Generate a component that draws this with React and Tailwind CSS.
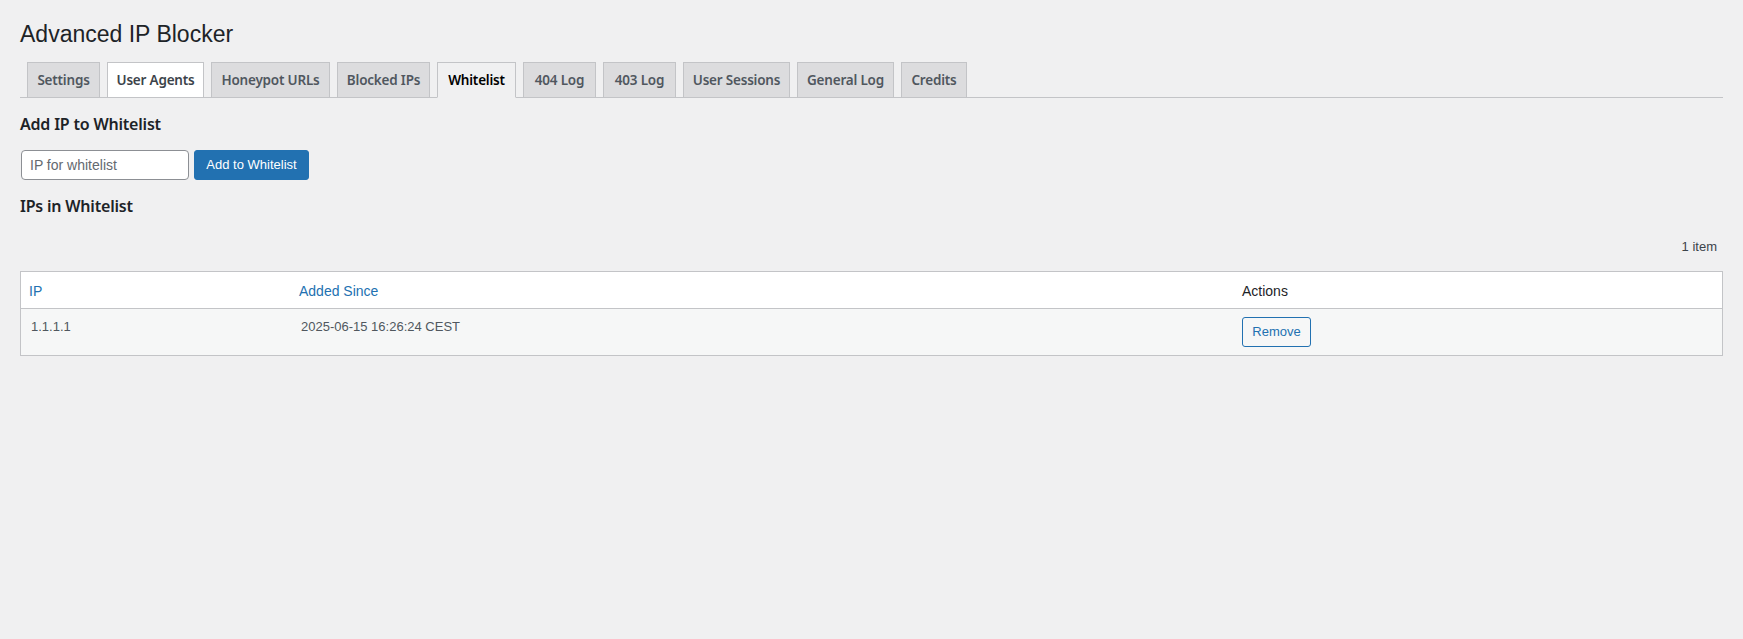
import React, { useState } from "react";

// tab widths measured from the admin screen, text is centred inside
const TABS = [
  { label: "Settings", w: "w-[73px]" },
  { label: "User Agents", w: "w-[97px]", hover: true },
  { label: "Honeypot URLs", w: "w-[119px]" },
  { label: "Blocked IPs", w: "w-[93px]" },
  { label: "Whitelist", w: "w-[79px]", active: true },
  { label: "404 Log", w: "w-[73px]" },
  { label: "403 Log", w: "w-[73px]" },
  { label: "User Sessions", w: "w-[107px]" },
  { label: "General Log", w: "w-[97px]" },
  { label: "Credits", w: "w-[66px]" },
];

const ROWS = [{ ip: "1.1.1.1", since: "2025-06-15 16:26:24 CEST" }];

const SEMI = { fontFamily: '"Noto Sans", "Liberation Sans", sans-serif' };

const Tab = ({ tab }) => {
  let look = "bg-[#dcdcde] text-[#50575e] border-[#c3c4c7]";
  if (tab.active) look = "bg-[#f0f0f1] text-black border-[#c3c4c7] border-b-[#f0f0f1]";
  else if (tab.hover) look = "bg-white text-[#3c434a] border-[#c3c4c7]";

  return (
    <a
      href="#"
      style={SEMI}
      className={`${tab.w} ${look} -mb-px block h-[36px] border py-[5px] text-center text-[13.5px] font-semibold leading-[24px] tracking-[-0.2px]`}
    >
      {tab.label}
    </a>
  );
};

export default function App() {
  const [ip, setIp] = useState("");
  const [rows, setRows] = useState(ROWS);

  return (
    <div
      className="min-h-screen bg-[#f0f0f1] px-[20px] pt-[10px] text-[13px] text-[#3c434a]"
      style={{ fontFamily: '"Liberation Sans", Arial, sans-serif' }}
    >
      {/* Titel */}
      <h1 className="pb-[4px] pt-[9px] text-[23px] font-normal leading-[30px] text-[#1d2327]">
        Advanced IP Blocker
      </h1>

      {/* Tabs */}
      <nav className="flex gap-[7px] border-b border-[#c3c4c7] pl-[7px] pt-[9px]">
        {TABS.map((t) => (
          <Tab key={t.label} tab={t} />
        ))}
      </nav>

      {/* Formular */}
      <h2
        style={SEMI}
        className="my-[17px] text-[16px] font-semibold leading-[18px] tracking-[-0.2px] text-[#1d2327]"
      >
        Add IP to Whitelist
      </h2>
      <form
        className="flex items-center"
        onSubmit={(e) => {
          e.preventDefault();
          if (!ip) return;
          setRows([...rows, { ip, since: "2025-06-15 16:26:24 CEST" }]);
          setIp("");
        }}
      >
        <input
          value={ip}
          onChange={(e) => setIp(e.target.value)}
          placeholder="IP for whitelist"
          className="ml-px h-[30px] w-[168px] rounded-[4px] border border-[#8c8f94] bg-white px-[8px] text-[14px] text-[#2c3338] placeholder:text-[#646970] focus:outline-none"
        />
        <button
          type="submit"
          className="ml-[5px] h-[30px] w-[115px] rounded-[3px] border border-[#2271b1] bg-[#2271b1] text-[13px] text-white"
        >
          Add to Whitelist
        </button>
      </form>

      <h2
        style={SEMI}
        className="mb-[17px] mt-[17px] text-[16px] font-semibold leading-[18px] tracking-[-0.2px] text-[#1d2327]"
      >
        IPs in Whitelist
      </h2>

      {/* Tabellen-Navigation */}
      <div className="flex h-[39px] justify-end pt-[1px]">
        <span className="mr-[6px] text-[13px] leading-[28px] text-[#3c434a]">
          {rows.length} {rows.length === 1 ? "item" : "items"}
        </span>
      </div>

      {/* Tabelle */}
      <div className="border border-[#c3c4c7] bg-white">
        <table className="w-full table-fixed border-collapse text-left">
          <thead>
            <tr className="border-b border-[#c3c4c7]">
              <th className="h-[36px] w-[270px] px-[8px] pb-0 pt-[3px] text-[14px] font-normal text-[#2271b1]">
                <a href="#">IP</a>
              </th>
              <th className="h-[36px] w-[941px] px-[8px] pb-0 pt-[3px] text-[14px] font-normal text-[#2271b1]">
                <a href="#">Added Since</a>
              </th>
              <th className="h-[36px] px-[10px] pb-0 pt-[3px] text-[14px] font-normal text-[#1d2327]">Actions</th>
            </tr>
          </thead>
          <tbody>
            {rows.map((r, i) => (
              <tr key={r.ip + i} className={i % 2 === 0 ? "bg-[#f6f7f7]" : "bg-white"}>
                <td className="px-[10px] py-[8px] align-top text-[13px] leading-[20px] text-[#50575e]">{r.ip}</td>
                <td className="px-[10px] py-[8px] align-top text-[13px] leading-[20px] text-[#50575e]">{r.since}</td>
                <td className="px-[10px] py-[8px] align-top">
                  <button
                    onClick={() => setRows(rows.filter((_, j) => j !== i))}
                    className="h-[30px] w-[69px] rounded-[3px] border border-[#2271b1] bg-[#f6f7f7] text-[13px] text-[#2271b1]"
                  >
                    Remove
                  </button>
                </td>
              </tr>
            ))}
          </tbody>
        </table>
      </div>
    </div>
  );
}
